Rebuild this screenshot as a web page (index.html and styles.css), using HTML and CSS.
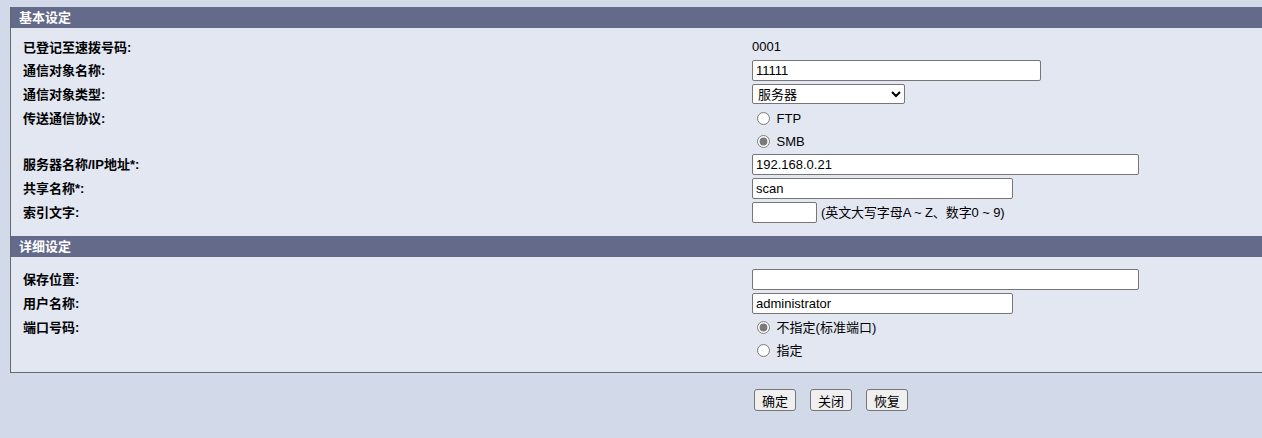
FILE: index.html
```html
<!DOCTYPE html>
<html lang="zh-CN">
<head>
  <meta charset="UTF-8">
  <title>通信对象设定</title>
  <link rel="stylesheet" href="styles.css">
</head>
<body>
  <div class="panel">
    <div class="section-title">基本设定</div>
    <div class="section">
      <div class="row">
        <div class="label">已登记至速拨号码:</div>
        <div class="value">0001</div>
      </div>
      <div class="row input-row">
        <div class="label">通信对象名称:</div>
        <div class="value"><input type="text" class="w-name" value="11111"></div>
      </div>
      <div class="row input-row">
        <div class="label">通信对象类型:</div>
        <div class="value">
          <select class="w-select">
            <option>服务器</option>
            <option>个人计算机</option>
          </select>
        </div>
      </div>
      <div class="row">
        <div class="label">传送通信协议:</div>
        <div class="value radios">
          <label class="radio"><input type="radio" name="proto"> FTP</label>
          <label class="radio"><input type="radio" name="proto" checked> SMB</label>
        </div>
      </div>
      <div class="row input-row">
        <div class="label">服务器名称/IP地址*:</div>
        <div class="value"><input type="text" class="w-long" value="192.168.0.21"></div>
      </div>
      <div class="row input-row">
        <div class="label">共享名称*:</div>
        <div class="value"><input type="text" class="w-mid" value="scan"></div>
      </div>
      <div class="row input-row">
        <div class="label">索引文字:</div>
        <div class="value">
          <input type="text" class="w-short">
          <span class="hint">(英文大写字母A ~ Z、数字0 ~ 9)</span>
        </div>
      </div>
    </div>

    <div class="section-title">详细设定</div>
    <div class="section last">
      <div class="row input-row">
        <div class="label">保存位置:</div>
        <div class="value"><input type="text" class="w-long"></div>
      </div>
      <div class="row input-row">
        <div class="label">用户名称:</div>
        <div class="value"><input type="text" class="w-mid" value="administrator"></div>
      </div>
      <div class="row">
        <div class="label">端口号码:</div>
        <div class="value radios">
          <label class="radio"><input type="radio" name="port" checked> 不指定(标准端口)</label>
          <label class="radio"><input type="radio" name="port"> 指定</label>
        </div>
      </div>
    </div>
  </div>

  <div class="buttons">
    <button>确定</button>
    <button>关闭</button>
    <button>恢复</button>
  </div>
</body>
</html>
```

FILE: styles.css
```css
body {
  margin: 7px 0 0 10px;
  background-color: #d2d9e8;
  font-family: "Liberation Sans", "Noto Sans CJK SC", sans-serif;
  font-size: 13px;
  color: #000;
  overflow: hidden;
}
.panel {
  width: 1300px;
  background: #e2e7f2;
  border-left: 1px solid #666870;
  border-bottom: 1px solid #666870;
}
.section-title {
  height: 21px;
  line-height: 21px;
  padding-left: 8px;
  background: #646a8a;
  color: #fff;
  font-weight: bold;
}
.section {
  padding: 7px 0 12px 0;
}
.section.last {
  padding: 10px 0 11px 0;
}
.row {
  display: grid;
  grid-template-columns: 741px 1fr;
  min-height: 23px;
}
.row.input-row {
  height: 24px;
  align-items: center;
}
.label {
  padding-left: 12px;
  font-weight: bold;
  line-height: 25px;
  height: 23px;
}
.row.input-row .label {
  line-height: 26px;
  height: 24px;
}
.value {
  line-height: 25px;
  height: 23px;
  display: flex;
  align-items: center;
}
.row.input-row .value {
  height: 24px;
}
.radios {
  height: auto;
  flex-direction: column;
  align-items: flex-start;
}
.radio {
  box-sizing: border-box;
  height: 23px;
  padding-top: 2px;
  display: flex;
  align-items: center;
  white-space: pre;
}
.radio input {
  margin: 0 3px 0 5px;
  width: 13px;
  height: 13px;
  accent-color: #7a7a7a;
}
input[type="text"] {
  box-sizing: border-box;
  height: 21px;
  margin: 0;
  padding: 0 3px;
  border: 1px solid #767676;
  border-radius: 2px;
  background: #fff;
  font-family: "Liberation Sans", "Noto Sans CJK SC", sans-serif;
  font-size: 13px;
  color: #000;
}
select {
  box-sizing: border-box;
  height: 20px;
  margin: 0;
  padding: 0 1px;
  border: 1px solid #767676;
  border-radius: 2px;
  background: #fff;
  font-family: "Liberation Sans", "Noto Sans CJK SC", sans-serif;
  font-size: 13px;
  color: #000;
}
.w-name {
  width: 289px;
}
.w-long {
  width: 387px;
}
.w-mid {
  width: 261px;
}
.w-short {
  width: 65px;
}
.w-select {
  width: 153px;
}
.hint {
  margin-left: 4px;
  letter-spacing: -0.1px;
}
.buttons {
  margin: 16px 0 0 744px;
  display: flex;
  gap: 14px;
}
.buttons button {
  box-sizing: border-box;
  height: 22px;
  padding: 0 7px;
  border: 1px solid #767676;
  border-radius: 3px;
  background: #efefef;
  font-family: "Liberation Sans", "Noto Sans CJK SC", sans-serif;
  font-size: 13px;
  color: #000;
}
```
